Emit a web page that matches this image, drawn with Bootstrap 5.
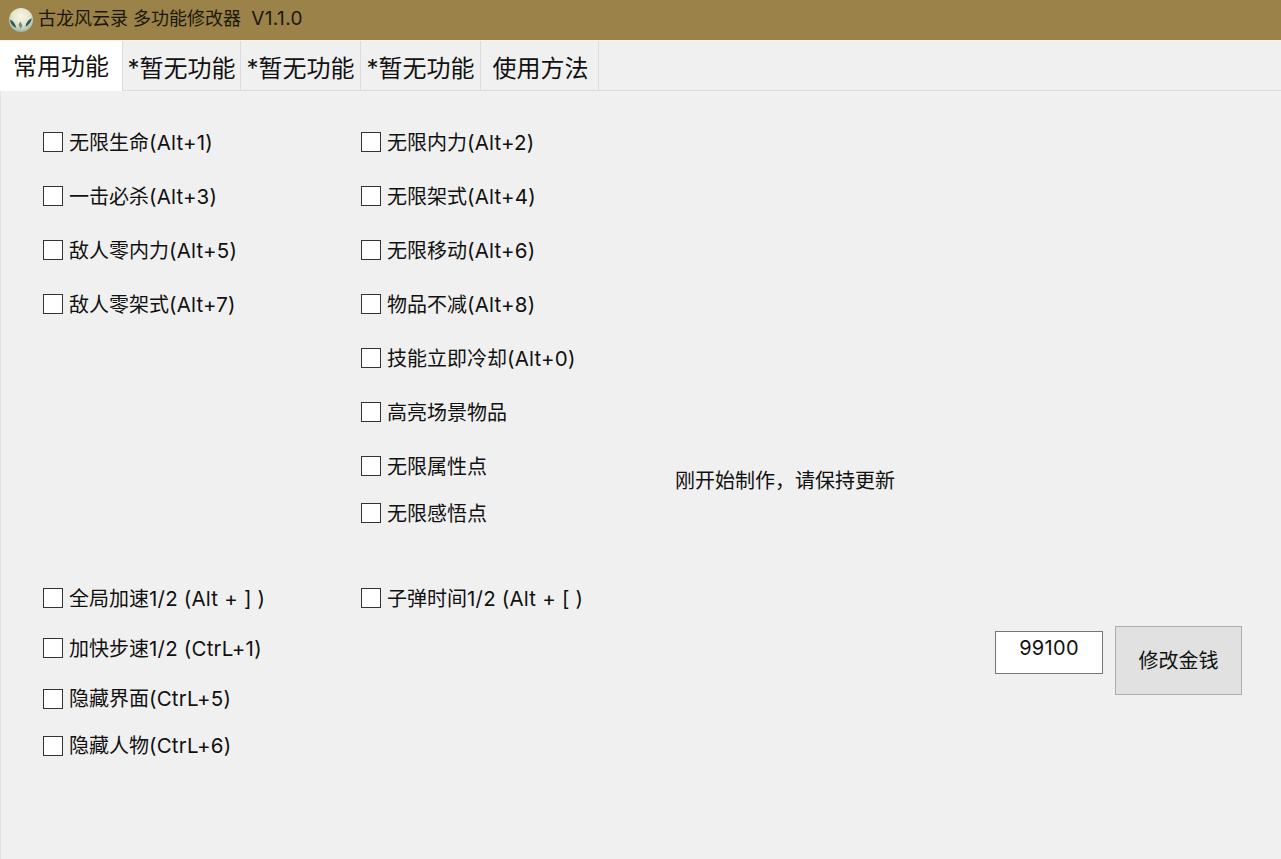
<!DOCTYPE html>
<html lang="zh">
<head>
<meta charset="utf-8">
<title>古龙风云录 多功能修改器 V1.1.0</title>
<link href="https://cdn.jsdelivr.net/npm/bootstrap@5.3.0/dist/css/bootstrap.min.css" rel="stylesheet">
<style>
html,body{height:100%;overflow:hidden}
body{background:#f0f0f0;color:#111;font-family:Inter,"Noto Sans CJK SC",sans-serif;font-size:20px;line-height:1.2}
.app-title{height:40px;background:#9a8249;padding-left:8px;gap:4px;font-size:18px;color:#1c1808}
.app-title span{padding-bottom:2px}
.app-title .lat{font-size:19px;letter-spacing:.4px;padding:0}
.app-tabs{height:51px;background:#f0f0f0;border-top:1px solid #f6f3ea;border-bottom:1px solid #dcdcdc;align-items:stretch}
.app-tab{font-size:24px;border-right:1px solid #dcdcdc;color:#111;background:#f0f0f0;display:flex;align-items:center;justify-content:center;padding-top:8px}
.app-tab.current{background:#fff;width:123px;padding-top:4px;margin-bottom:-1px;padding-bottom:2px}
.app-tab.tail{padding-left:2px}
.w-a{width:118px}.w-b{width:120px}
.app-panel{height:768px;border-left:1px solid #e2e2e2;padding-left:42px;padding-top:24px}
.top-grid{display:grid;grid-template-columns:318px 314px 1fr;height:446px}
.opt{display:flex;align-items:center;height:54px;gap:6px;white-space:nowrap}
.opt.s40{height:40px}
.opt.s43{height:43px}
.opt.s50{height:50px}
.opt.s51{height:51px}
.opt .form-check-input{width:20px;height:20px;margin:0;border:1px solid #333;border-radius:0;background-color:#fff;flex:none;box-shadow:none}
.opt-text{padding-top:2px}
.lat{font-size:20.5px;letter-spacing:.2px}
.note{align-self:start;margin-top:354px;font-size:20px}
.low-grid{display:grid;grid-template-columns:318px 1fr;margin-top:12px}
.money-zone{display:flex;align-items:flex-start;justify-content:flex-end;padding-right:39px;gap:12px;margin-top:3px}
.money-input{width:108px;height:43px;margin-top:5px;border:1px solid #767676;background:#fff;text-align:center;font-size:20px;letter-spacing:.3px;padding:0 0 10px;color:#111;border-radius:0;outline:0}
.money-btn{width:127px;height:69px;background:#e1e1e1;border:1px solid #adadad;border-radius:0;font-size:20px;color:#111;padding:0}
</style>
</head>
<body>
<div class="app-title d-flex align-items-center">
<svg width="26" height="26" viewBox="0 0 25 25" aria-hidden="true"><defs><radialGradient id="ball" cx=".5" cy=".35" r=".65"><stop offset="0" stop-color="#f8f6e6"/><stop offset=".6" stop-color="#e3e3c8"/><stop offset="1" stop-color="#9db3a6"/></radialGradient></defs><circle cx="12.5" cy="12.5" r="11.5" fill="url(#ball)"/><path d="M2 12c3 1 5 4 6 8-3-1-6-4-6-8zM23 11c-1 4-3 6-6 8 0-3 2-7 6-8z" fill="#2a5a62"/><path d="M10 17l2-3 2 4-2 3z" fill="#6f8f86"/></svg>
<span>古龙风云录 多功能修改器&nbsp; <span class="lat">V1.1.0</span></span>
</div>
<div class="app-tabs d-flex">
<div class="app-tab current">常用功能</div>
<div class="app-tab w-a">*暂无功能</div>
<div class="app-tab w-b">*暂无功能</div>
<div class="app-tab w-b">*暂无功能</div>
<div class="app-tab w-a tail">使用方法</div>
</div>
<div class="app-panel">
<div class="top-grid">
<div>
<label class="opt"><input class="form-check-input" type="checkbox"><span class="opt-text">无限生命<span class="lat">(Alt+1)</span></span></label>
<label class="opt"><input class="form-check-input" type="checkbox"><span class="opt-text">一击必杀<span class="lat">(Alt+3)</span></span></label>
<label class="opt"><input class="form-check-input" type="checkbox"><span class="opt-text">敌人零内力<span class="lat">(Alt+5)</span></span></label>
<label class="opt"><input class="form-check-input" type="checkbox"><span class="opt-text">敌人零架式<span class="lat">(Alt+7)</span></span></label>
</div>
<div>
<label class="opt"><input class="form-check-input" type="checkbox"><span class="opt-text">无限内力<span class="lat">(Alt+2)</span></span></label>
<label class="opt"><input class="form-check-input" type="checkbox"><span class="opt-text">无限架式<span class="lat">(Alt+4)</span></span></label>
<label class="opt"><input class="form-check-input" type="checkbox"><span class="opt-text">无限移动<span class="lat">(Alt+6)</span></span></label>
<label class="opt"><input class="form-check-input" type="checkbox"><span class="opt-text">物品不减<span class="lat">(Alt+8)</span></span></label>
<label class="opt"><input class="form-check-input" type="checkbox"><span class="opt-text">技能立即冷却<span class="lat">(Alt+0)</span></span></label>
<label class="opt"><input class="form-check-input" type="checkbox"><span class="opt-text">高亮场景物品</span></label>
<label class="opt"><input class="form-check-input" type="checkbox"><span class="opt-text">无限属性点</span></label>
<label class="opt s40"><input class="form-check-input" type="checkbox"><span class="opt-text">无限感悟点</span></label>
</div>
<div class="note">刚开始制作，请保持更新</div>
</div>
<div class="low-grid">
<div>
<label class="opt s50"><input class="form-check-input" type="checkbox"><span class="opt-text">全局加速<span class="lat">1/2 (Alt + ] )</span></span></label>
<label class="opt s50"><input class="form-check-input" type="checkbox"><span class="opt-text">加快步速<span class="lat">1/2 (CtrL+1)</span></span></label>
<label class="opt s51"><input class="form-check-input" type="checkbox"><span class="opt-text">隐藏界面<span class="lat">(CtrL+5)</span></span></label>
<label class="opt s43"><input class="form-check-input" type="checkbox"><span class="opt-text">隐藏人物<span class="lat">(CtrL+6)</span></span></label>
</div>
<div>
<label class="opt s50"><input class="form-check-input" type="checkbox"><span class="opt-text">子弹时间<span class="lat">1/2 (Alt + [ )</span></span></label>
<div class="money-zone">
<input class="money-input" type="text" value="99100">
<button class="money-btn btn" type="button">修改金钱</button>
</div>
</div>
</div>
</div>
<script src="https://cdn.jsdelivr.net/npm/bootstrap@5.3.0/dist/js/bootstrap.bundle.min.js"></script>
</body>
</html>
